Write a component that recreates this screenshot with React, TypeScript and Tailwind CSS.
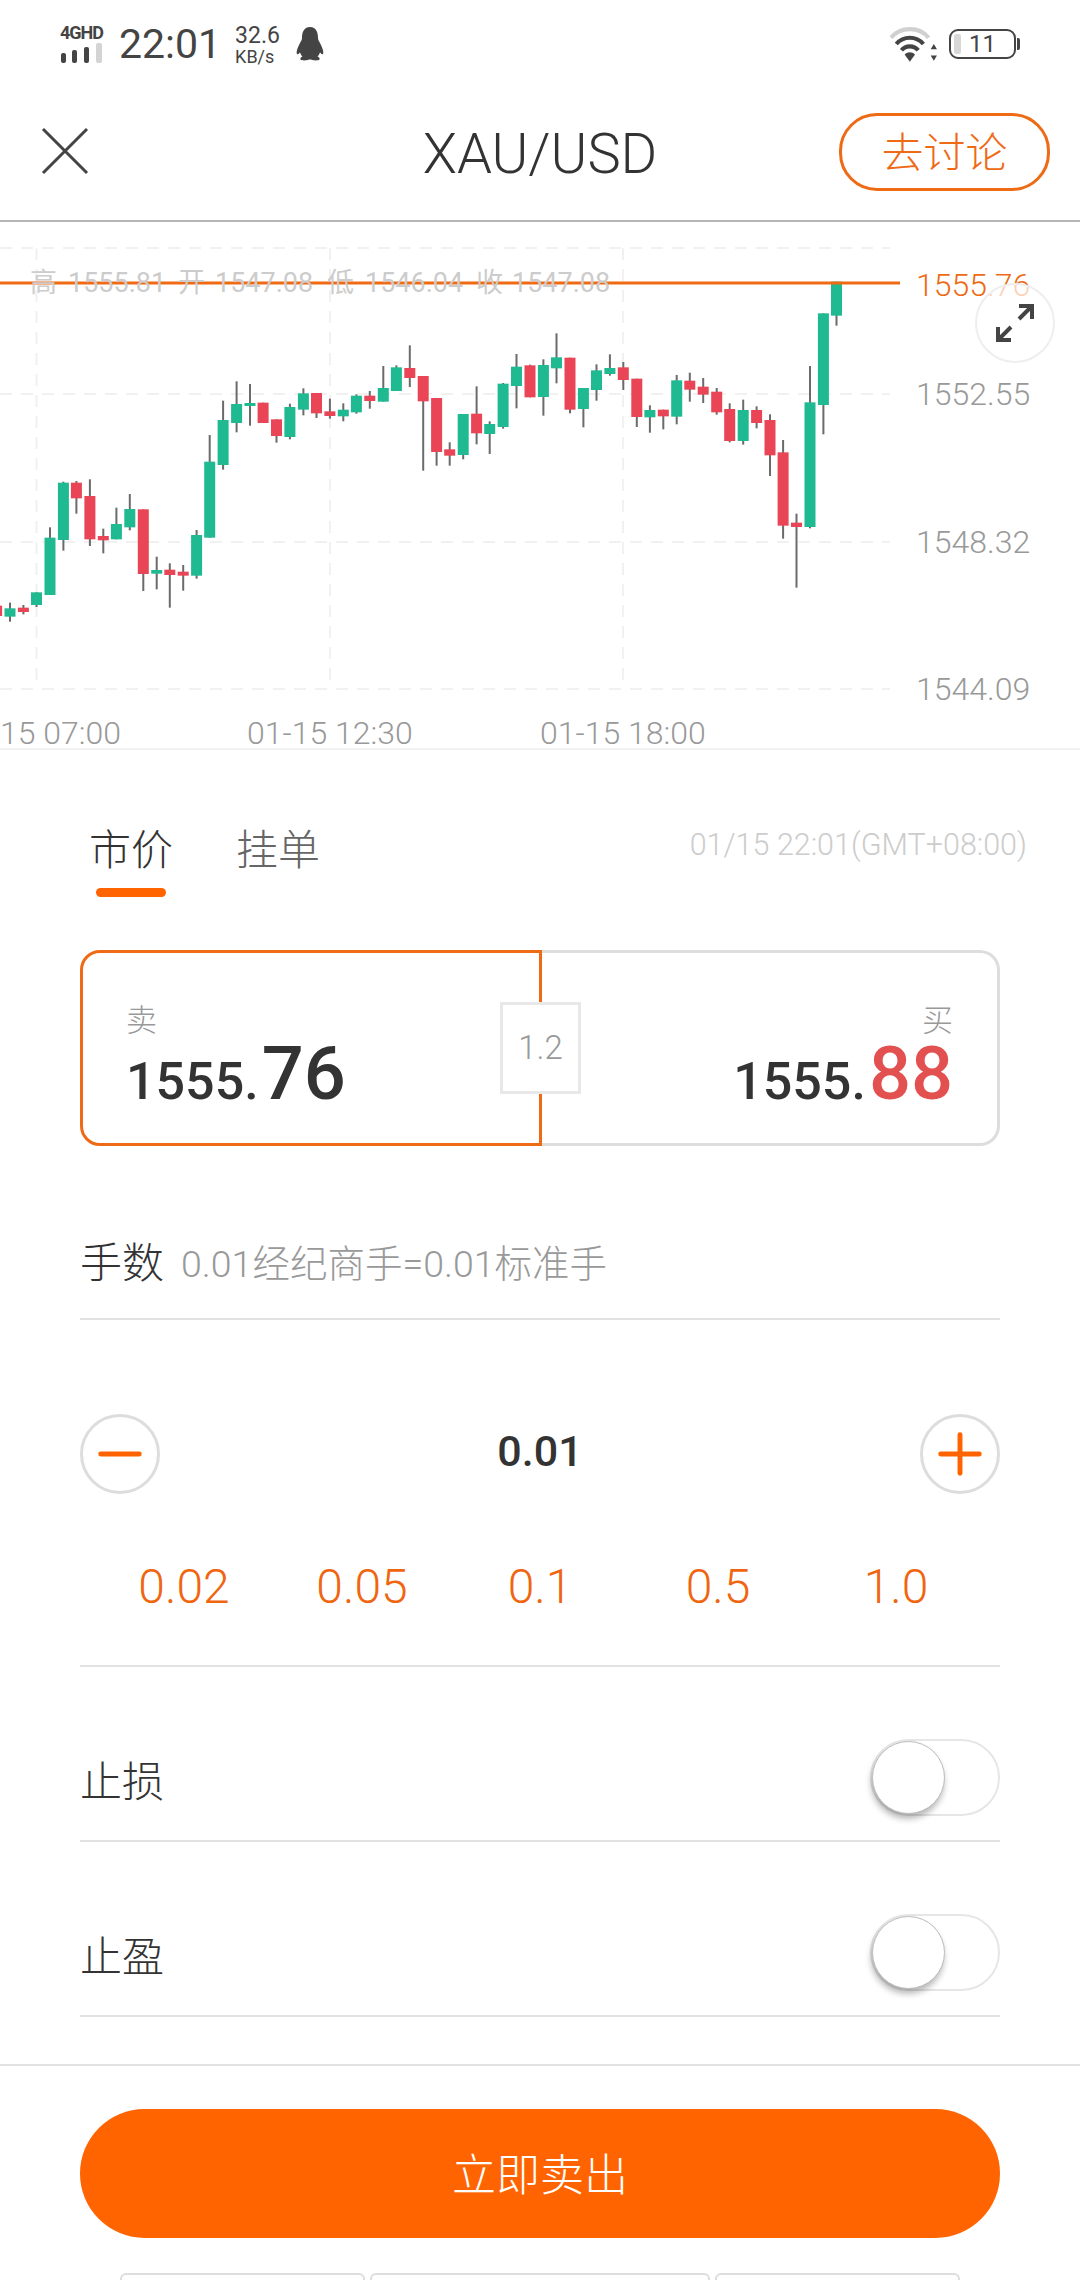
import { Minus, Plus } from 'lucide-react';

// [x, wickTop, wickBottom, bodyTop, bodyBottom, up] measured off the chart
type Candle = [number, number, number, number, number, boolean];

const candles: Candle[] = [
  [-3.4, 1037, 1068, 1037, 1068, false],
  [10, 1028, 1085, 1045, 1070, true],
  [23.4, 1035, 1063, 1043, 1056, false],
  [36.5, 997, 1041, 997, 1035, true],
  [50, 802, 1005, 833, 1005, true],
  [63.4, 665, 872, 668, 840, true],
  [76.4, 663, 761, 668, 715, false],
  [89.9, 658, 858, 708, 838, false],
  [103.3, 806, 880, 828, 841, false],
  [116.4, 743, 838, 792, 838, true],
  [129.8, 702, 811, 747, 802, true],
  [143.3, 748, 993, 748, 942, false],
  [156.7, 890, 988, 930, 941, true],
  [169.8, 910, 1043, 929, 945, false],
  [183.2, 915, 992, 935, 947, false],
  [196.6, 810, 956, 825, 947, true],
  [209.7, 525, 833, 605, 833, true],
  [223.1, 422, 629, 480, 615, true],
  [236.6, 364, 517, 432, 489, true],
  [250, 372, 497, 429, 438, true],
  [263.1, 428, 489, 428, 489, false],
  [276.5, 478, 548, 478, 528, false],
  [289.9, 431, 538, 441, 531, true],
  [303.4, 385, 466, 400, 449, true],
  [316.5, 399, 474, 399, 460, false],
  [329.9, 416, 476, 454, 468, false],
  [343.3, 430, 484, 449, 469, true],
  [356.4, 403, 461, 407, 457, true],
  [369.8, 393, 446, 407, 423, false],
  [383.3, 318, 425, 384, 425, true],
  [396.4, 316, 393, 322, 393, true],
  [409.8, 256, 381, 324, 354, false],
  [423.2, 348, 632, 348, 424, false],
  [436.6, 414, 617, 414, 576, false],
  [449.7, 547, 617, 568, 587, false],
  [463.2, 462, 598, 462, 585, true],
  [476.6, 379, 553, 461, 520, false],
  [489.7, 484, 582, 492, 522, true],
  [503.1, 369, 506, 371, 501, true],
  [516.5, 282, 445, 320, 378, true],
  [530, 314, 412, 316, 412, false],
  [543.4, 298, 467, 315, 411, true],
  [556.5, 220, 370, 292, 325, true],
  [570, 293, 460, 293, 449, false],
  [583.4, 384, 502, 384, 447, true],
  [596.5, 313, 422, 331, 390, true],
  [609.9, 283, 347, 324, 342, true],
  [623.3, 306, 390, 322, 360, false],
  [636.8, 356, 501, 356, 471, false],
  [649.9, 436, 518, 450, 472, true],
  [663.3, 449, 508, 449, 469, false],
  [676.7, 345, 493, 361, 470, true],
  [689.8, 338, 425, 362, 389, false],
  [703.2, 354, 429, 380, 404, false],
  [716.7, 384, 464, 395, 457, false],
  [729.7, 430, 547, 447, 543, false],
  [743.2, 419, 554, 450, 543, true],
  [756.6, 439, 505, 450, 489, false],
  [770, 463, 648, 480, 586, false],
  [783.1, 540, 836, 577, 797, false],
  [796.5, 761, 983, 788, 801, false],
  [810, 318, 805, 427, 801, true],
  [823.4, 160, 523, 160, 435, true],
  [836.5, 65, 197, 65, 167, true],
];

const toY = (v: number) => 260 + v / 3;

function PriceChart() {
  return (
    <svg viewBox="0 222 1080 527" className="block h-[527px] w-[1080px]">
      {[248, 394, 542, 689].map((y) => (
        <line key={y} x1="0" x2="890" y1={y} y2={y} stroke="#f1f1f1" strokeWidth="2" strokeDasharray="12 9" />
      ))}
      {[36.5, 330, 623].map((x) => (
        <line key={x} x1={x} x2={x} y1="248" y2="689" stroke="#f1f1f1" strokeWidth="2" strokeDasharray="12 9" />
      ))}
      {candles.map(([x, wt, wb, bt, bb, up], i) => (
        <g key={i}>
          <rect x={x - 1} y={toY(wt)} width="2" height={(wb - wt) / 3} fill="#6b6b6b" />
          <rect x={x - 5.5} y={toY(bt)} width="11" height={(bb - bt) / 3} fill={up ? '#20ba92' : '#e94556'} />
        </g>
      ))}
      <rect x="0" y="281.5" width="900" height="3" fill="#f06a14" />
    </svg>
  );
}

function StatusBar() {
  return (
    <div className="flex h-[78px] items-center justify-between pl-[60px] pr-[60px] pt-[10px] text-[#444]">
      <div className="flex items-center">
        <div className="flex w-[46px] flex-col">
          <span className="text-[18px] font-bold leading-[16px] tracking-[-1px]">4GHD</span>
          <svg width="44" height="21" viewBox="0 0 44 21" className="mt-[2px]">
            <rect x="1" y="10" width="5" height="10" rx="2" fill="#444" />
            <rect x="12" y="7" width="5" height="13" rx="2" fill="#444" />
            <rect x="24" y="4" width="5" height="16" rx="2" fill="#444" />
            <rect x="36" y="0" width="6" height="20" rx="2" fill="#d4d4d4" />
          </svg>
        </div>
        <span className="ml-[13px] text-[41px] leading-none">22:01</span>
        <div className="ml-[14px] flex flex-col items-start">
          <span className="text-[23px] leading-[24px]">32.6</span>
          <span className="text-[18px] leading-[17px]">KB/s</span>
        </div>
        <svg width="30" height="34" viewBox="0 0 30 34" className="ml-[15px]">
          <path
            d="M15 0C8.500 0 7 6 7 11c0 2-1 3-2.500 6C2.500 21 1 25 2 27c1 .8 2-.5 3-1.500.5 1.500 1.500 3 2.500 4-1.500.8-2.500 1.500-2 3 .5 1 4 1 6 .8 1.500-.2 2.500-.8 3.500-.8s2 .6 3.500.8c2 .2 5.500.2 6-.8.5-1.500-.5-2.200-2-3 1-1 2-2.500 2.500-4 1 1 2 2.300 3 1.500 1-2-.5-6-2.500-10C24 14 23 13 23 11c0-5-1.500-11-8-11Z"
            fill="#444"
          />
        </svg>
      </div>
      <div className="flex items-center gap-[11px]">
        <svg width="48" height="36" viewBox="0 0 46 34">
          <path d="M1 11C10 0 28 0 37 11" fill="none" stroke="#d0d0d0" strokeWidth="4" />
          <path d="M6 17C13 9 25 9 32 17" fill="none" stroke="#444" strokeWidth="4" />
          <path d="M11 23C15 18 23 18 27 23" fill="none" stroke="#444" strokeWidth="4" />
          <path d="M14 27a7 7 0 0 1 10 0l-5 7Z" fill="#444" />
          <path d="M42 17l3 5h-6ZM42 33l3-5h-6Z" fill="#444" />
        </svg>
        <div className="flex items-center">
          <div className="relative flex h-[30px] w-[67px] items-center justify-center rounded-[9px] border-[2.5px] border-[#444] text-[24px] leading-none">
            <div className="absolute bottom-[3px] left-[3px] top-[3px] w-[7px] rounded-[2px] bg-[#d8d8d8]" />
            11
          </div>
          <div className="ml-[1px] h-[12px] w-[3px] rounded-r-[2px] bg-[#444]" />
        </div>
      </div>
    </div>
  );
}

function Header() {
  return (
    <div className="relative flex h-[144px] items-center justify-center border-b-2 border-[#b5b5b5] pt-[10px]">
      <svg width="48" height="48" viewBox="0 0 48 48" className="absolute left-[41px] top-[49px]">
        <path d="M2 2 46 46M46 2 2 46" stroke="#444" strokeWidth="3" fill="none" />
      </svg>
      <span className="text-[56px] font-light leading-none text-[#333]">XAU/USD</span>
      <button
        type="button"
        className="absolute right-[30px] top-[35px] flex h-[78px] w-[211px] items-center justify-center rounded-[38px] border-[3px] border-[#ee6a15] pt-[3px] text-[42px] font-light text-[#ee6a15]"
      >
        去讨论
      </button>
    </div>
  );
}

function Chart() {
  const axis = 'absolute left-[916px] -translate-y-1/2 text-[32px] font-light leading-none text-[#999]';
  const ohlc = 'absolute top-[61px] -translate-y-1/2 text-[27px] leading-none text-[#ccc]';
  const time = 'absolute top-[511px] -translate-y-1/2 text-[32px] font-light leading-none text-[#999]';
  return (
    <div className="relative h-[528px] border-b-2 border-[#f2f2f2]">
      <PriceChart />
      <span className={`${ohlc} left-[30px]`}>高</span>
      <span className={`${ohlc} left-[68px]`}>1555.81</span>
      <span className={`${ohlc} left-[178px]`}>开</span>
      <span className={`${ohlc} left-[215px]`}>1547.08</span>
      <span className={`${ohlc} left-[327px]`}>低</span>
      <span className={`${ohlc} left-[365px]`}>1546.04</span>
      <span className={`${ohlc} left-[476px]`}>收</span>
      <span className={`${ohlc} left-[512px]`}>1547.08</span>
      <span className="absolute left-[916px] top-[63px] -translate-y-1/2 text-[32px] font-light leading-none text-[#ee6a15]">1555.76</span>
      <span className={`${axis} top-[172px]`}>1552.55</span>
      <span className={`${axis} top-[320px]`}>1548.32</span>
      <span className={`${axis} top-[467px]`}>1544.09</span>
      <span className={`${time} left-0`}>15 07:00</span>
      <span className={`${time} left-[247px]`}>01-15 12:30</span>
      <span className={`${time} left-[540px]`}>01-15 18:00</span>
      <div className="absolute left-[975px] top-[61px] flex h-[80px] w-[80px] items-center justify-center rounded-full border-2 border-[#eeeeee] bg-white/70">
        <svg width="40" height="40" viewBox="0 0 40 40" fill="none" stroke="#444" strokeWidth="4">
          <path d="M24 16 37 3M24 3h13v13" />
          <path d="M16 24 3 37M3 24v13h13" />
        </svg>
      </div>
    </div>
  );
}

function QuoteBox() {
  return (
    <div className="relative flex h-[196px]">
      <div className="h-full w-[462px] rounded-l-[20px] border-[3px] border-[#ee6a15] pl-[43px] pt-[52px]">
        <div className="text-[31px] font-light leading-[32px] text-[#999]">卖</div>
        <div className="flex h-[70px] items-baseline text-[#333]">
          <span className="text-[52px] font-medium leading-none">1555.</span>
          <span className="ml-[3px] text-[74px] font-medium leading-none">76</span>
        </div>
      </div>
      <div className="h-full flex-1 rounded-r-[20px] border-[3px] border-l-0 border-[#dddddd] pr-[44px] pt-[52px] text-right">
        <div className="text-[31px] font-light leading-[32px] text-[#999]">买</div>
        <div className="flex h-[70px] items-baseline justify-end text-[#333]">
          <span className="text-[52px] font-medium leading-none">1555.</span>
          <span className="ml-[3px] text-[74px] font-medium leading-none text-[#e25050]">88</span>
        </div>
      </div>
      <div className="absolute left-[420px] top-[52px] flex h-[92px] w-[81px] items-center justify-center border-[3px] border-[#e8e8e8] bg-white text-[33px] font-light text-[#999]">
        1.2
      </div>
    </div>
  );
}

function SwitchRow({ label }: { label: string }) {
  return (
    <div className="flex h-[175px] items-center justify-between border-b-2 border-[#e2e2e2] pt-[48px]">
      <span className="mt-[10px] text-[42px] font-light leading-none text-[#333]">{label}</span>
      <div className="h-[77px] w-[130px] rounded-full border-2 border-[#e6e6e6]">
        <div className="h-[73px] w-[73px] rounded-full border border-[#bbbbbb] bg-white shadow-[-1px_5px_6px_rgba(0,0,0,0.28)]" />
      </div>
    </div>
  );
}

export default function App() {
  return (
    <div className="h-[2280px] w-[1080px] overflow-hidden bg-white font-['Roboto','Noto_Sans_CJK_SC',sans-serif]">
      <StatusBar />
      <Header />
      <Chart />

      <div className="flex h-[200px] items-start justify-between pl-[89px] pr-[53px] pt-[79px]">
        <div className="flex gap-[63px] text-[42px] font-light leading-[44px]">
          <div className="relative text-[#333]">
            市价
            <div className="absolute left-[7px] top-[59px] h-[9px] w-[70px] rounded-full bg-[#ff6400]" />
          </div>
          <div className="text-[#666]">挂单</div>
        </div>
        <span className="mt-[-2px] text-[30.5px] font-light leading-[36px] text-[#ccc]">01/15 22:01(GMT+08:00)</span>
      </div>

      <div className="px-[80px]">
        <QuoteBox />

        <div className="mt-[75px] flex h-[99px] items-start gap-[17px] border-b-2 border-[#e2e2e2] pt-[21px]">
          <span className="text-[42px] font-light leading-[44px] text-[#333]">手数</span>
          <span className="text-[37.5px] font-light leading-[44px] text-[#999]">0.01经纪商手=0.01标准手</span>
        </div>

        <div className="mt-[94px] flex items-center justify-between">
          <div className="flex h-[80px] w-[80px] items-center justify-center rounded-full border-[3px] border-[#dddddd] text-[#ff6400]">
            <Minus size={66} strokeWidth={1.8} />
          </div>
          <span className="pb-[5px] text-[43px] font-medium leading-none text-[#333]">0.01</span>
          <div className="flex h-[80px] w-[80px] items-center justify-center rounded-full border-[3px] border-[#dddddd] text-[#ff6400]">
            <Plus size={66} strokeWidth={1.8} />
          </div>
        </div>

        <div className="mt-[68px] grid h-[105px] grid-cols-5 border-b-2 border-[#e2e2e2] px-[15px] text-center text-[48px] font-light leading-[50px] text-[#f0650f]">
          <span>0.02</span>
          <span>0.05</span>
          <span>0.1</span>
          <span>0.5</span>
          <span>1.0</span>
        </div>

        <SwitchRow label="止损" />
        <SwitchRow label="止盈" />
      </div>

      <div className="mt-[47px] border-t-2 border-[#e2e2e2] px-[80px] pt-[43px]">
        <button
          type="button"
          className="flex h-[129px] w-full items-center justify-center rounded-full bg-[#ff6400] pt-[4px] text-[44px] font-light text-white"
        >
          立即卖出
        </button>
        <div className="mt-[35px] flex gap-[5px] px-[40px]">
          <div className="h-[20px] w-[245px] rounded-t-[6px] border-2 border-[#dddddd]" />
          <div className="h-[20px] w-[340px] rounded-t-[6px] border-2 border-[#dddddd]" />
          <div className="h-[20px] w-[245px] rounded-t-[6px] border-2 border-[#dddddd]" />
        </div>
      </div>
    </div>
  );
}
